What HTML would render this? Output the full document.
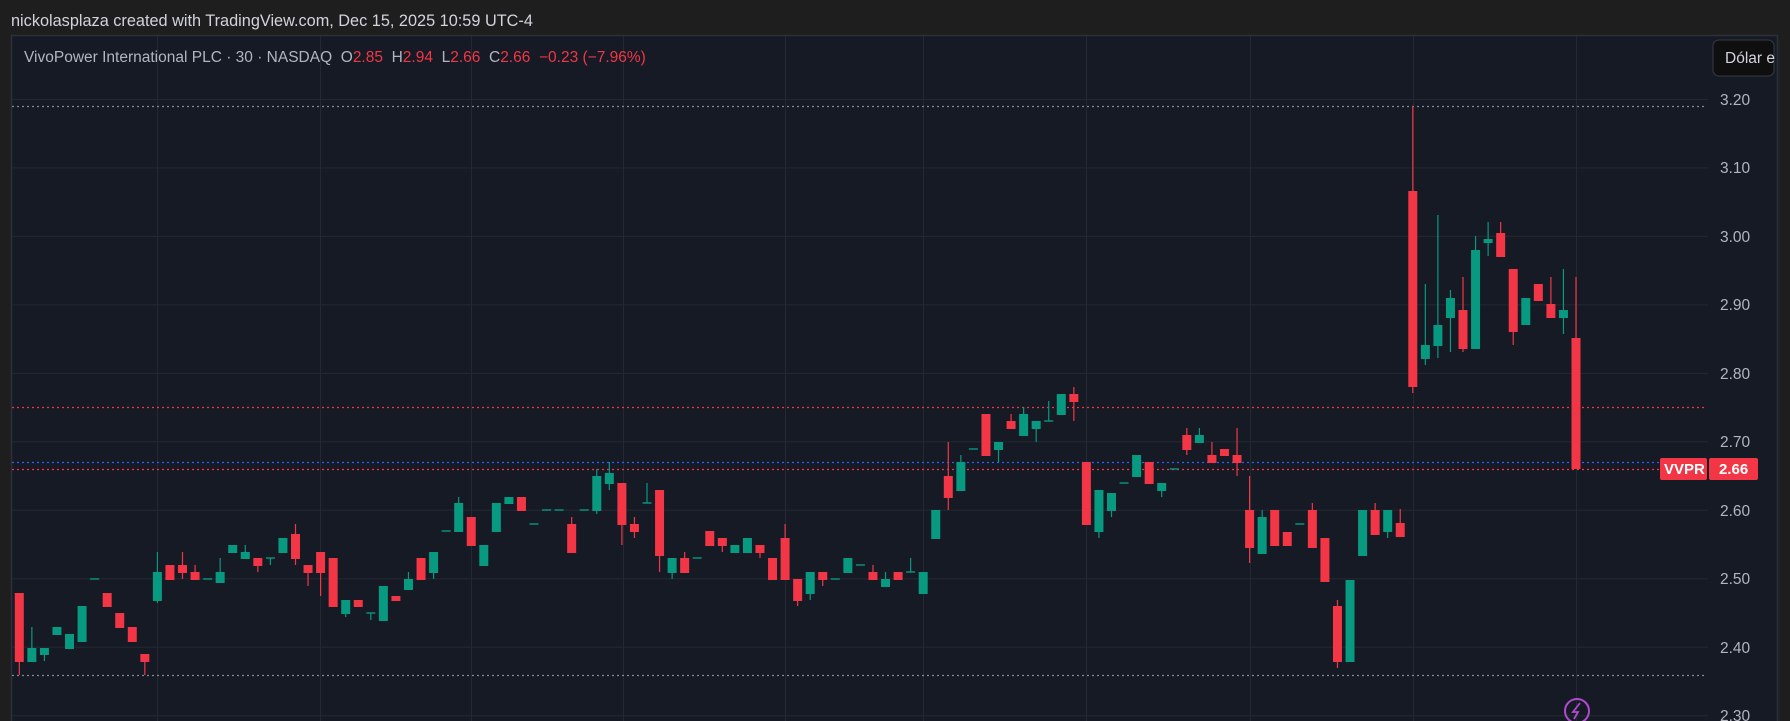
<!DOCTYPE html>
<html><head><meta charset="utf-8"><style>
html,body{margin:0;padding:0;background:#1e1e1e;width:1790px;height:721px;overflow:hidden}
svg{display:block}
text{font-family:"Liberation Sans",sans-serif}
</style></head><body>
<svg width="1790" height="721" viewBox="0 0 1790 721" xmlns="http://www.w3.org/2000/svg">
<rect x="0" y="0" width="1790" height="721" fill="#1e1e1e"/>
<text x="11" y="26" font-size="16.3" fill="#d1d4dc">nickolasplaza created with TradingView.com, Dec 15, 2025 10:59 UTC-4</text>
<rect x="11.5" y="35.5" width="1766" height="690" fill="#161a25" stroke="#2e3038" stroke-width="1.5"/>
<g stroke="#242833" stroke-width="1">
<line x1="12" y1="99.5" x2="1708" y2="99.5"/><line x1="12" y1="167.9" x2="1708" y2="167.9"/><line x1="12" y1="236.4" x2="1708" y2="236.4"/><line x1="12" y1="304.9" x2="1708" y2="304.9"/><line x1="12" y1="373.4" x2="1708" y2="373.4"/><line x1="12" y1="441.8" x2="1708" y2="441.8"/><line x1="12" y1="510.3" x2="1708" y2="510.3"/><line x1="12" y1="578.8" x2="1708" y2="578.8"/><line x1="12" y1="647.3" x2="1708" y2="647.3"/><line x1="12" y1="715.7" x2="1708" y2="715.7"/>
<line x1="157.5" y1="36" x2="157.5" y2="721"/><line x1="320.5" y1="36" x2="320.5" y2="721"/><line x1="471.5" y1="36" x2="471.5" y2="721"/><line x1="623.5" y1="36" x2="623.5" y2="721"/><line x1="785.5" y1="36" x2="785.5" y2="721"/><line x1="923.5" y1="36" x2="923.5" y2="721"/><line x1="1086.5" y1="36" x2="1086.5" y2="721"/><line x1="1250.5" y1="36" x2="1250.5" y2="721"/><line x1="1413.5" y1="36" x2="1413.5" y2="721"/><line x1="1576.5" y1="36" x2="1576.5" y2="721"/>
</g>
<g stroke-width="1.2" stroke-dasharray="2 3">
<line x1="12" y1="106.5" x2="1706" y2="106.5" stroke="#868993"/>
<line x1="12" y1="407.5" x2="1706" y2="407.5" stroke="#f23645"/>
<line x1="12" y1="462.5" x2="1660" y2="462.5" stroke="#2962ff"/>
<line x1="12" y1="469.5" x2="1660" y2="469.5" stroke="#f23645"/>
<line x1="12" y1="675.5" x2="1706" y2="675.5" stroke="#868993"/>
</g>
<text x="24" y="62" font-size="15.5" fill="#b2b5be" xml:space="preserve">VivoPower International PLC · 30 · NASDAQ  O<tspan fill="#f23645">2.85</tspan>  H<tspan fill="#f23645">2.94</tspan>  L<tspan fill="#f23645">2.66</tspan>  C<tspan fill="#f23645">2.66</tspan>  <tspan fill="#f23645">−0.23 (−7.96%)</tspan></text>
<g font-size="15.5" fill="#b2b5be">
<text x="1720" y="105">3.20</text><text x="1720" y="173">3.10</text><text x="1720" y="242">3.00</text><text x="1720" y="310">2.90</text><text x="1720" y="379">2.80</text><text x="1720" y="447">2.70</text><text x="1720" y="516">2.60</text><text x="1720" y="584">2.50</text><text x="1720" y="653">2.40</text><text x="1720" y="721">2.30</text>
</g>
<rect x="1713" y="40" width="61" height="36" rx="6" fill="#0f0f0f" stroke="#363a45"/>
<text x="1725" y="63" font-size="15.5" fill="#d1d4dc">Dólar e</text>
<rect x="1660" y="458" width="47" height="22" rx="2" fill="#f23645"/>
<rect x="1709" y="458" width="49" height="22" rx="2" fill="#f23645"/>
<text x="1664" y="474" font-size="15" font-weight="bold" fill="#fff">VVPR</text>
<text x="1719" y="474" font-size="15" font-weight="bold" fill="#fff">2.66</text>
<circle cx="1577" cy="711" r="12" fill="none" stroke="#b04ad0" stroke-width="2"/>
<path d="M1580 703 L1573 712 L1578 712 L1574 719" fill="none" stroke="#b04ad0" stroke-width="1.8"/>
<g id="c"></g>
</svg>
<script>
var D=[
['r',593,662,593,675],['g',648,662,627,662],['g',648,655,648,661],['g',627,635,627,635],['g',634,649,634,649],['g',606,642,606,642],['d',579],['r',593,607,593,607],['r',613,628,613,628],['r',627,642,627,642],
['r',654,662,654,675],['g',572,601,552,603],['r',565,580,565,580],['r',565,573,552,579],['r',572,580,565,580],['d',579],['g',572,583,558,583],['g',545,553,545,553],['g',552,559,545,559],['r',558,566,558,572],
['d',558,558,565],['g',538,553,538,553],['r',534,559,524,565],['r',565,573,565,586],['r',552,573,552,596],['r',558,607,558,607],['g',600,614,600,617],['r',600,607,600,607],['d',613,613,620],['g',586,621,586,621],
['r',596,601,596,601],['g',579,590,572,590],['r',558,580,558,580],['g',552,573,552,579],['d',531],['g',503,532,497,532],['r',517,546,517,546],['g',545,566,545,566],['g',503,532,503,532],['g',497,504,497,504],
['r',497,511,497,511],['d',524],['d',510],['d',510],['r',524,553,517,553],['d',510],['g',476,511,469,514],['g',473,484,462,490],['r',483,525,483,545],['r',524,532,517,538],
['d',503,483,503],['r',490,556,490,572],['g',558,573,558,579],['r',558,573,552,573],['d',558],['r',531,546,531,546],['r',538,546,538,552],['g',545,553,545,553],['g',538,553,538,553],['r',545,553,545,558],
['r',558,580,558,580],['r',538,580,524,580],['r',579,601,579,606],['g',572,594,572,600],['r',572,580,572,586],['d',579],['g',558,573,558,573],['d',565],['r',572,580,565,580],['g',579,587,572,587],
['r',572,580,572,580],['d',572,558,572],['g',572,594,572,594],['g',510,539,510,539],['r',476,498,442,510],['g',462,491,455,491],['d',449],['r',414,456,414,456],['g',442,450,442,462],['r',421,429,414,429],
['g',414,436,407,436],['g',421,429,421,442],['d',421,401,421],['g',394,415,394,415],['r',394,402,387,421],['r',462,525,462,525],['g',490,532,490,538],['g',493,511,493,517],['d',483],['g',455,477,455,477],
['r',462,484,462,484],['g',483,491,483,497],['d',469],['r',435,450,428,455],['g',435,443,428,443],['r',455,463,442,463],['r',449,456,449,456],['r',455,463,428,476],['r',510,548,476,563],['g',517,554,510,554],
['r',510,546,510,546],['r',532,546,532,546],['d',524],['r',510,548,503,548],['r',538,582,538,582],['r',606,662,600,668],['g',580,662,580,662],['g',510,556,510,556],['r',510,535,503,535],['g',510,532,510,538],
['r',523,537,509,537],['r',191,387,106,393],['g',345,359,284,365],['g',325,346,215,358],['g',298,318,290,352],['r',310,349,277,352],['g',250,349,236,349],['g',239,243,222,256],['r',233,257,222,257],['r',269,332,269,345],
['g',298,325,298,325],['r',284,301,284,301],['r',304,318,277,318],['g',310,318,269,334],['r',338,469,277,469]
];
var g=document.getElementById('c'),s='';
for(var i=0;i<D.length;i++){var d=D[i],x=19.3+12.554*i,c;
if(d[0]=='d'){c='#089981';s+='<rect x="'+(x-4.5)+'" y="'+(d[1]-0.7)+'" width="9" height="1.4" fill="'+c+'"/>';
if(d.length>2)s+='<rect x="'+(x-0.6)+'" y="'+d[2]+'" width="1.2" height="'+(d[3]-d[2])+'" fill="'+c+'"/>';continue;}
c=d[0]=='g'?'#089981':'#f23645';
s+='<rect x="'+(x-0.6)+'" y="'+d[3]+'" width="1.2" height="'+(d[4]-d[3])+'" fill="'+c+'"/>';
s+='<rect x="'+(x-4.5)+'" y="'+d[1]+'" width="9" height="'+Math.max(1.4,d[2]-d[1])+'" fill="'+c+'"/>';}
g.innerHTML=s;
</script>
</body></html>
